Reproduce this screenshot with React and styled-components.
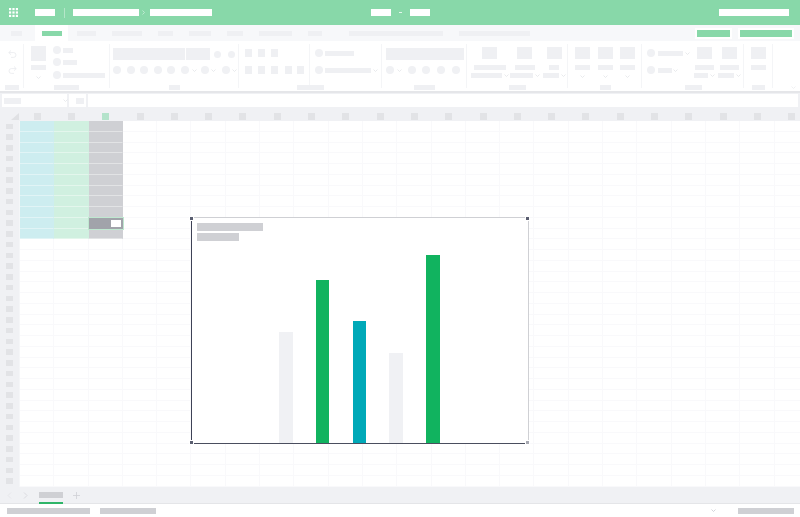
import React from "react";
import styled, { createGlobalStyle } from "styled-components";

const Global = createGlobalStyle`
  html, body { margin: 0; padding: 0; background: #fff; }
  body { font-family: "Liberation Sans", Arial, sans-serif; }
`;

const GREEN = "#88d8a9";
const SOFT = "#eff0f3";
const MUTED = "#cfd0d4";
const COL_W = 34.3;
const ROW_H = 10.75;

const Page = styled.div`
  width: 800px;
  height: 517px;
  display: flex;
  flex-direction: column;
  overflow: hidden;
  background: #fff;
`;

const Bar = styled.div`
  flex-shrink: 0;
  width: ${(p) => p.$w}px;
  height: ${(p) => p.$h ?? 5}px;
  margin-left: ${(p) => p.$ml ?? 0}px;
  background: ${(p) => p.$c ?? SOFT};
`;

const Dot = styled.div`
  flex-shrink: 0;
  width: ${(p) => p.$d ?? 8}px;
  height: ${(p) => p.$d ?? 8}px;
  margin-left: ${(p) => p.$ml ?? 0}px;
  border-radius: 50%;
  background: #f0f1f4;
`;

const CaretSvg = styled.svg`
  flex-shrink: 0;
  display: block;
  margin-left: ${(p) => p.$ml ?? 0}px;
  margin-top: ${(p) => p.$mt ?? 0}px;
`;

const Caret = ({ ml, mt, color = "#e3e4e8" }) => (
  <CaretSvg $ml={ml} $mt={mt} width="5" height="3" viewBox="0 0 5 3">
    <path d="M.5.5 2.5 2.5 4.5.5" fill="none" stroke={color} strokeWidth="0.8" />
  </CaretSvg>
);

/* top bar */
const TopBar = styled.header`
  height: 25px;
  flex-shrink: 0;
  display: flex;
  align-items: center;
  padding-left: 9px;
  background: ${GREEN};
`;

const TopDivider = styled.div`
  width: 1px;
  height: 10px;
  margin-left: 9px;
  background: #b5e6c9;
`;

const Waffle = () => (
  <svg width="9" height="9" viewBox="0 0 9 9" style={{ flexShrink: 0 }}>
    {[0, 3.4, 6.8].flatMap((y) =>
      [0, 3.4, 6.8].map((x) => <rect key={`${x}-${y}`} x={x} y={y} width="2.2" height="2.2" fill="#fff" />)
    )}
  </svg>
);

const CrumbCaret = () => (
  <svg width="3" height="5" viewBox="0 0 3 5" style={{ marginLeft: 3, flexShrink: 0 }}>
    <path d="M.5.5 2.5 2.5.5 4.5" fill="none" stroke="#c9eeda" strokeWidth="0.8" />
  </svg>
);

/* ribbon tabs */
const TabStrip = styled.nav`
  height: 16px;
  flex-shrink: 0;
  display: flex;
  align-items: center;
  background: #f7f8fa;
`;

const ActiveTab = styled.div`
  width: 33px;
  height: 16px;
  margin-left: 13px;
  flex-shrink: 0;
  display: flex;
  align-items: center;
  justify-content: center;
  background: #fff;
`;

const TabActions = styled.div`
  margin-left: auto;
  padding-right: 6px;
  display: flex;
  gap: 6px;
`;

const TabButton = styled.div`
  padding: 2px;
  background: #fff;
  height: 7px;
  box-sizing: content-box;
`;

/* ribbon */
const Ribbon = styled.section`
  height: 50px;
  flex-shrink: 0;
  display: flex;
  flex-direction: column;
  border-bottom: 2px solid #e5e6e9;
  background: #fff;
`;

const Groups = styled.div`
  margin-top: 3px;
  height: 44px;
  flex-shrink: 0;
  display: flex;
`;

const Group = styled.div`
  box-sizing: border-box;
  width: ${(p) => p.$w}px;
  height: 44px;
  flex-shrink: 0;
  display: flex;
  padding-left: ${(p) => p.$pl ?? 0}px;
  padding-top: ${(p) => p.$pt ?? 0}px;
  border-right: 1px solid #f4f5f7;
`;

const Stack = styled.div`
  display: flex;
  flex-direction: column;
  flex-shrink: 0;
  width: ${(p) => (p.$w ? `${p.$w}px` : "auto")};
  margin-left: ${(p) => p.$ml ?? 0}px;
  margin-top: ${(p) => p.$mt ?? 0}px;
  align-items: ${(p) => p.$align ?? "flex-start"};
  gap: ${(p) => p.$gap ?? 0}px;
`;

const Line = styled.div`
  display: flex;
  align-items: center;
  height: ${(p) => p.$h ?? 8}px;
  margin-top: ${(p) => p.$mt ?? 0}px;
`;

const ToolCol = styled.div`
  width: ${(p) => p.$w}px;
  flex-shrink: 0;
  margin-left: ${(p) => p.$ml ?? 0}px;
  margin-top: ${(p) => p.$mt ?? 0}px;
  display: flex;
  flex-direction: column;
  align-items: center;
`;

const ToolBox = styled.div`
  width: 15px;
  height: ${(p) => p.$h ?? 12}px;
  margin-bottom: ${(p) => p.$mb ?? 6}px;
  background: ${SOFT};
`;

const ToolLabel = styled(Bar)`
  margin-bottom: 3px;
`;

const SubRow = styled.div`
  display: flex;
  align-items: center;
  height: 5px;
`;

const Labels = styled.div`
  margin-top: -3px;
  display: flex;
  height: 5px;
  align-items: center;
`;

const ToolIcon = styled.div`
  color: #e9eaed;
  height: 8px;
  display: flex;
`;

const UndoIcon = ({ flip }) => (
  <ToolIcon>
    <svg width="9" height="8" viewBox="0 0 9 8" style={flip ? { transform: "scaleX(-1)" } : undefined}>
      <path d="M3 .5 .8 2.6 3 4.7M.8 2.6H5.6a2.4 2.4 0 0 1 0 4.8H3" fill="none" stroke="currentColor" strokeWidth="0.8" />
    </svg>
  </ToolIcon>
);

const Tool = ({ label, sub, subMl }) => (
  <>
    <ToolBox />
    <ToolLabel $w={label} />
    {sub ? (
      <SubRow>
        <Bar $w={sub} />
        <Caret ml={subMl ?? 2} />
      </SubRow>
    ) : null}
  </>
);

/* formula bar */
const FormulaRow = styled.div`
  box-sizing: border-box;
  height: 14px;
  flex-shrink: 0;
  display: flex;
  gap: 2px;
  padding: 1px 2px 0;
  background: #f0f1f4;
`;

const FormulaField = styled.div`
  height: 13px;
  width: ${(p) => p.$w}px;
  flex: ${(p) => (p.$grow ? 1 : "none")};
  display: flex;
  align-items: center;
  box-sizing: border-box;
  padding-left: ${(p) => p.$pl ?? 0}px;
  background: #fff;
`;

/* column header */
const ColumnHeader = styled.div`
  height: 14px;
  flex-shrink: 0;
  display: flex;
  background: #f0f1f4;
`;

const Corner = styled.div`
  width: 20px;
  flex-shrink: 0;
  display: flex;
  align-items: flex-end;
  justify-content: flex-end;
  padding-bottom: 1px;
  box-sizing: border-box;
  padding-right: 1px;
`;

const ColumnCells = styled.div`
  display: grid;
  grid-template-columns: repeat(23, ${COL_W}px);
`;

const ColumnCell = styled.div`
  display: flex;
  justify-content: center;
  padding-top: 6px;
`;

const ColumnMark = styled.div`
  width: 7px;
  height: 6.5px;
  background: ${(p) => (p.$on ? "#b4e3cb" : "#e2e3e6")};
`;

/* sheet */
const Body = styled.main`
  flex: 1;
  min-height: 0;
  display: flex;
`;

const RowHeader = styled.div`
  width: 20px;
  flex-shrink: 0;
  overflow: hidden;
  box-sizing: border-box;
  border-right: 1px solid #f5f6f8;
  background: #f0f1f4;
`;

const RowCell = styled.div`
  height: ${ROW_H}px;
  display: flex;
  align-items: center;
  padding-left: 6px;
`;

const RowMark = styled.div`
  width: 7px;
  height: 5.5px;
  background: #e2e3e6;
`;

const Sheet = styled.div`
  position: relative;
  flex: 1;
  overflow: hidden;
  display: grid;
  grid-template-columns: repeat(23, ${COL_W}px);
  grid-auto-rows: ${ROW_H}px;
`;

const Cell = styled.div`
  box-sizing: border-box;
  background: ${(p) => p.$bg ?? "#fff"};
  border-right: 1px solid ${(p) => (p.$bg ? "transparent" : "#f9f9fb")};
  border-bottom: 1px solid ${(p) => (p.$bg ? "rgba(255,255,255,.4)" : "#f9f9fb")};
`;

const ActiveCell = styled.div`
  box-sizing: border-box;
  display: flex;
  align-items: center;
  justify-content: flex-end;
  padding-right: 1.5px;
  background: #a1a3aa;
  outline: 1px solid #bfe8d0;
  z-index: 1;
`;

const ActiveFill = styled.div`
  width: 10px;
  height: 7px;
  background: #fff;
`;

const Chart = styled.figure`
  position: absolute;
  left: 171px;
  top: 96px;
  width: 338px;
  height: 227px;
  margin: 0;
  box-sizing: border-box;
  display: flex;
  flex-direction: column;
  padding: 5px 0 0 5px;
  background: #fff;
  border-top: 1px solid ${MUTED};
  border-right: 1px solid ${MUTED};
  border-left: 1px solid #3e4256;
  border-bottom: 1px solid #4a4e5e;
  z-index: 2;
`;

const ChartTitle = styled.div`
  display: flex;
  flex-direction: column;
  gap: 2px;
`;

const Plot = styled.div`
  flex: 1;
  min-height: 0;
  display: flex;
  align-items: flex-end;
  gap: 23.25px;
  padding-left: 82px;
`;

const Column = styled.div`
  width: 13.5px;
  height: ${(p) => p.$h}px;
  background: ${(p) => p.$c};
`;

const Handle = styled.span`
  position: absolute;
  width: 3px;
  height: 3px;
  ${(p) => (p.$right ? "right: -2px;" : "left: -3px;")}
  ${(p) => (p.$bottom ? "bottom: -2px;" : "top: -2px;")}
  background: ${(p) => p.$c ?? "#5a5e70"};
  border: 0.5px solid #fff;
  box-sizing: content-box;
`;

/* sheet tabs & status */
const SheetTabs = styled.div`
  box-sizing: content-box;
  height: 16px;
  flex-shrink: 0;
  display: flex;
  align-items: center;
  padding-left: 7px;
  background: #f0f1f4;
  border-bottom: 1px solid #e4e5e8;
`;

const SheetTab = styled.div`
  position: relative;
  height: 16px;
  margin-left: 11px;
  display: flex;
  align-items: center;
`;

const TabUnderline = styled.div`
  position: absolute;
  left: 0;
  right: 0;
  bottom: -1px;
  height: 2px;
  background: #2fb568;
`;

const StatusBar = styled.footer`
  height: 13px;
  flex-shrink: 0;
  display: flex;
  align-items: center;
  padding-left: 7px;
  background: #fff;
`;

const Chev = ({ d, color, ml }) => (
  <svg width="5" height="7" viewBox="0 0 5 7" style={{ marginLeft: ml, flexShrink: 0 }}>
    <path d={d} fill="none" stroke={color} strokeWidth="0.8" />
  </svg>
);

const rows = Array.from({ length: 35 });
const cols = Array.from({ length: 23 });
const tint = ["#cdedf0", "#d0f0e0", "#cfd0d4"];

export default function App() {
  return (
    <Page>
      <Global />
      <TopBar>
        <Waffle />
        <Bar $w={20} $h={7} $ml={17} $c="#fff" />
        <TopDivider />
        <Bar $w={66} $h={7} $ml={8} $c="#fff" />
        <CrumbCaret />
        <Bar $w={62} $h={7} $ml={5} $c="#fff" />
        <Bar $w={20} $h={7} $ml={159} $c="#fff" />
        <Bar $w={3} $h={1} $ml={8} $c="#e4f6ec" />
        <Bar $w={20} $h={7} $ml={8} $c="#fff" />
        <Bar $w={70} $h={7} $ml={289} $c="#fff" />
      </TopBar>

      <TabStrip>
        <Bar $w={11} $ml={11} />
        <ActiveTab>
          <Bar $w={20} $c={GREEN} />
        </ActiveTab>
        <Bar $w={19} $ml={9} />
        <Bar $w={30} $ml={16} />
        <Bar $w={15} $ml={16} />
        <Bar $w={22} $ml={16} />
        <Bar $w={16} $ml={16} />
        <Bar $w={33} $ml={16} />
        <Bar $w={14} $ml={16} />
        <Bar $w={94} $ml={27} />
        <Bar $w={71} $ml={16} />
        <TabActions>
          <TabButton>
            <Bar $w={33} $h={7} $c={GREEN} />
          </TabButton>
          <TabButton>
            <Bar $w={52} $h={7} $c={GREEN} />
          </TabButton>
        </TabActions>
      </TabStrip>

      <Ribbon>
        <Groups>
          <Group $w={24} $pl={8} $pt={6}>
            <Stack $gap={8}>
              <UndoIcon />
              <UndoIcon flip />
            </Stack>
          </Group>
          <Group $w={86} $pl={7} $pt={2}>
            <ToolCol $w={15}>
              <ToolBox $h={15} $mb={4} />
              <ToolLabel $w={15} />
              <Caret mt={3} />
            </ToolCol>
            <Stack $ml={7}>
              <Line $h={8}>
                <Dot />
                <Bar $w={10} $ml={2} />
              </Line>
              <Line $h={8} $mt={4}>
                <Dot />
                <Bar $w={14} $ml={2} />
              </Line>
              <Line $h={8} $mt={5}>
                <Dot />
                <Bar $w={42} $ml={2} />
              </Line>
            </Stack>
          </Group>
          <Group $w={129} $pl={3} $pt={4}>
            <Stack>
              <Line $h={12}>
                <Bar $w={72} $h={12} />
                <Bar $w={24} $h={12} $ml={1} />
                <Dot $d={7} $ml={4} />
                <Dot $d={7} $ml={7} />
              </Line>
              <Line $mt={6}>
                <Dot />
                <Dot $ml={5.5} />
                <Dot $ml={5.5} />
                <Dot $ml={5.5} />
                <Dot $ml={5.5} />
                <Dot $ml={5.5} />
                <Caret ml={3} />
                <Dot $ml={4} />
                <Caret ml={2} />
                <Dot $ml={6} />
                <Caret ml={2} />
              </Line>
            </Stack>
          </Group>
          <Group $w={71} $pl={6} $pt={5}>
            <Stack>
              <Line>
                <Bar $w={7} $h={8} />
                <Bar $w={7} $h={8} $ml={6} />
                <Bar $w={7} $h={8} $ml={6} />
              </Line>
              <Line $mt={9}>
                <Bar $w={7} $h={8} />
                <Bar $w={7} $h={8} $ml={6} />
                <Bar $w={7} $h={8} $ml={6} />
                <Bar $w={7} $h={8} $ml={7} />
                <Bar $w={7} $h={8} $ml={5} />
              </Line>
            </Stack>
          </Group>
          <Group $w={72} $pl={5} $pt={5}>
            <Stack>
              <Line>
                <Dot />
                <Bar $w={29} $ml={2} />
              </Line>
              <Line $mt={9}>
                <Dot />
                <Bar $w={46} $ml={2} />
                <Caret ml={2} />
              </Line>
            </Stack>
          </Group>
          <Group $w={85} $pl={4} $pt={4}>
            <Stack>
              <Bar $w={78} $h={12} />
              <Line $mt={6}>
                <Dot />
                <Caret ml={3} />
                <Dot $ml={6} />
                <Dot $ml={6} />
                <Dot $ml={7} />
                <Dot $ml={7} />
              </Line>
            </Stack>
          </Group>
          <Group $w={101} $pl={4} $pt={3}>
            <ToolCol $w={37}>
              <Tool label={32} sub={31} />
            </ToolCol>
            <ToolCol $w={27} $ml={3}>
              <Tool label={20} sub={23} />
            </ToolCol>
            <ToolCol $w={24} $ml={4}>
              <Tool label={10} sub={16} />
            </ToolCol>
          </Group>
          <Group $w={74} $pl={7} $pt={3}>
            <ToolCol $w={15}>
              <Tool label={15} />
              <Caret mt={2} />
            </ToolCol>
            <ToolCol $w={15} $ml={8}>
              <Tool label={15} />
              <Caret mt={2} />
            </ToolCol>
            <ToolCol $w={15} $ml={7}>
              <Tool label={15} />
              <Caret mt={2} />
            </ToolCol>
          </Group>
          <Group $w={102} $pl={5} $pt={5}>
            <Stack $w={46}>
              <Line>
                <Dot />
                <Bar $w={25} $ml={3} />
                <Caret ml={2} />
              </Line>
              <Line $mt={9}>
                <Dot />
                <Bar $w={14} $ml={3} />
                <Caret ml={1} />
              </Line>
            </Stack>
            <ToolCol $w={22} $mt={-2}>
              <Tool label={19} sub={14} />
            </ToolCol>
            <ToolCol $w={22} $ml={3} $mt={-2}>
              <Tool label={19} sub={16} />
            </ToolCol>
          </Group>
          <Group $w={29} $pl={7} $pt={3}>
            <ToolCol $w={15}>
              <Tool label={15} />
            </ToolCol>
          </Group>
        </Groups>
        <Labels>
          <Bar $w={14} $ml={5} />
          <Bar $w={25} $ml={35} />
          <Bar $w={11} $ml={90} />
          <Bar $w={27} $ml={117} />
          <Bar $w={21} $ml={90} />
          <Bar $w={17} $ml={74} />
          <Bar $w={11} $ml={74} />
          <Bar $w={17} $ml={74} />
          <Bar $w={13} $ml={50} />
          <Caret ml={26} color="#eceef0" />
        </Labels>
      </Ribbon>

      <FormulaRow>
        <FormulaField $w={65} $pl={2}>
          <Bar $w={17} $h={6} />
          <Caret ml={42} />
        </FormulaField>
        <FormulaField $w={17} $pl={7}>
          <Bar $w={8} $h={6} />
        </FormulaField>
        <FormulaField $grow />
      </FormulaRow>

      <ColumnHeader>
        <Corner>
          <svg width="8" height="7" viewBox="0 0 8 7">
            <path d="M8 0V7H0Z" fill="#e0e1e4" />
          </svg>
        </Corner>
        <ColumnCells>
          {cols.map((_, i) => (
            <ColumnCell key={i}>
              <ColumnMark $on={i === 2} />
            </ColumnCell>
          ))}
        </ColumnCells>
      </ColumnHeader>

      <Body>
        <RowHeader>
          {rows.map((_, i) => (
            <RowCell key={i}>
              <RowMark />
            </RowCell>
          ))}
        </RowHeader>
        <Sheet>
          {rows.map((_, r) =>
            cols.map((_, c) =>
              r === 9 && c === 2 ? (
                <ActiveCell key={`${r}-${c}`}>
                  <ActiveFill />
                </ActiveCell>
              ) : (
                <Cell key={`${r}-${c}`} $bg={r < 11 && c < 3 ? tint[c] : undefined} />
              )
            )
          )}
          <Chart>
            <ChartTitle>
              <Bar $w={66} $h={8} $c={MUTED} />
              <Bar $w={42} $h={8} $c={MUTED} />
            </ChartTitle>
            <Plot>
              <Column $h={111} $c="#f0f1f4" />
              <Column $h={163} $c="#11b35f" />
              <Column $h={122} $c="#00a9b8" />
              <Column $h={90} $c="#f0f1f4" />
              <Column $h={188} $c="#11b35f" />
            </Plot>
            <Handle />
            <Handle $right />
            <Handle $bottom />
            <Handle $right $bottom $c="#a7a9b2" />
          </Chart>
        </Sheet>
      </Body>

      <SheetTabs>
        <Chev d="M4 .5 1 3.5 4 6.5" color="#e3e4e8" />
        <Chev d="M1 .5 4 3.5 1 6.5" color="#d4d6da" ml={11} />
        <SheetTab>
          <Bar $w={24} $h={6} $c={MUTED} />
          <TabUnderline />
        </SheetTab>
        <svg width="7" height="7" viewBox="0 0 7 7" style={{ marginLeft: 10 }}>
          <path d="M3.5 0V7M0 3.5H7" stroke="#cfd1d6" strokeWidth="0.8" />
        </svg>
      </SheetTabs>

      <StatusBar>
        <Bar $w={83} $h={6} $c={MUTED} />
        <Bar $w={56} $h={6} $ml={10} $c={MUTED} />
        <Caret ml={555} color="#c8cad0" />
        <Bar $w={56} $h={6} $ml={22} $c={MUTED} />
      </StatusBar>
    </Page>
  );
}
